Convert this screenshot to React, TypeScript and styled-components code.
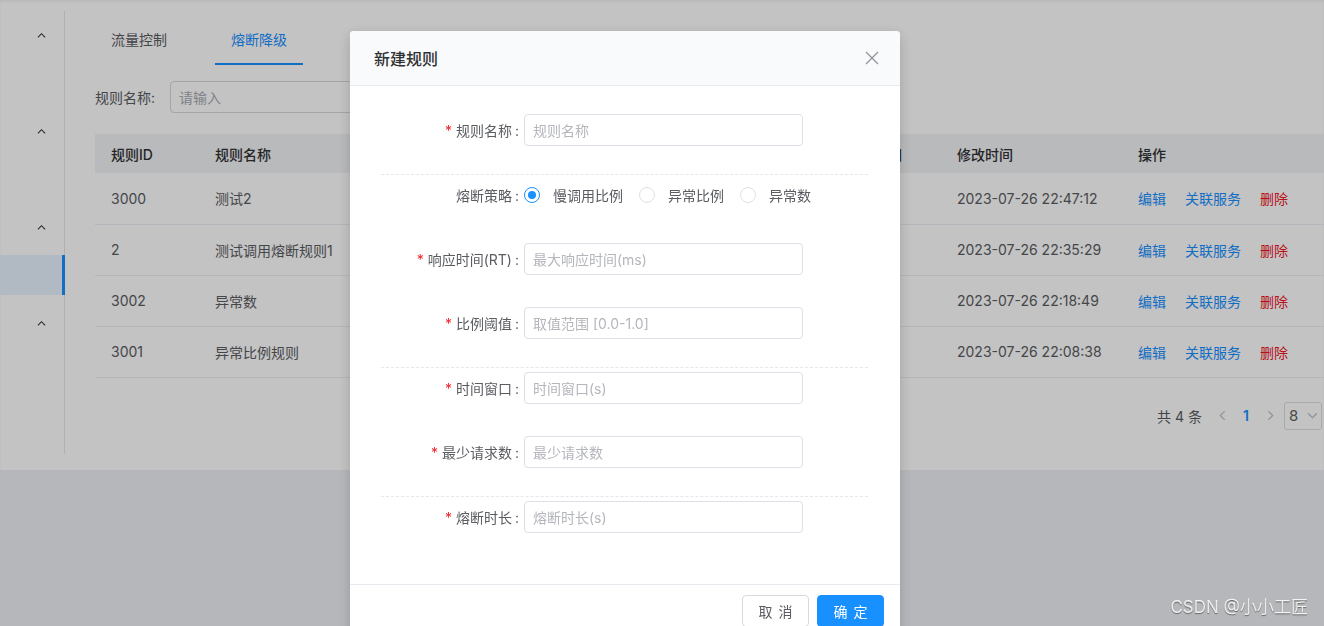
import React from 'react';
import styled, { createGlobalStyle } from 'styled-components';

const GlobalStyle = createGlobalStyle`
  html, body {
    margin: 0;
    padding: 0;
    background: #eef0f4;
    font-family: Inter, "Liberation Sans", "Noto Sans CJK SC", sans-serif;
    font-size: 14px;
    color: #606266;
    overflow: hidden;
  }
  * { box-sizing: border-box; }
`;

const rows = [
  { id: '3000', name: '测试2', time: '2023-07-26 22:47:12' },
  { id: '2', name: '测试调用熔断规则1', time: '2023-07-26 22:35:29' },
  { id: '3002', name: '异常数', time: '2023-07-26 22:18:49' },
  { id: '3001', name: '异常比例规则', time: '2023-07-26 22:08:38' },
];

const Chevron = ({ dir = 'up', size = 9, color = '#333' }: { dir?: 'up' | 'down' | 'left' | 'right'; size?: number; color?: string }) => {
  const pts = {
    up: '1,7 5,3 9,7',
    down: '1,3 5,7 9,3',
    left: '7,1 3,5 7,9',
    right: '3,1 7,5 3,9',
  }[dir];
  return (
    <svg width={size} height={size} viewBox='0 0 10 10'>
      <polyline points={pts} fill='none' stroke={color} strokeWidth='1.2' />
    </svg>
  );
};

const App: React.FC = () => {
  return (
    <>
      <GlobalStyle />
      <Panel>
        <Sidebar>
          <SideGroup>
            <GroupHead><Chevron /></GroupHead>
            <SideItem />
          </SideGroup>
          <SideGroup>
            <GroupHead><Chevron /></GroupHead>
            <SideItem />
          </SideGroup>
          <SideGroup>
            <GroupHead><Chevron /></GroupHead>
            <SideItem $active />
          </SideGroup>
          <SideGroup>
            <GroupHead><Chevron /></GroupHead>
          </SideGroup>
        </Sidebar>

        <Main>
          <Tabs>
            <Tab>流量控制</Tab>
            <Tab $active>熔断降级</Tab>
          </Tabs>

          <SearchRow>
            <SearchLabel>规则名称:</SearchLabel>
            <SearchInput placeholder='请输入' />
          </SearchRow>

          <Table>
            <colgroup>
              <col style={{ width: 104 }} />
              <col style={{ width: 260 }} />
              <col style={{ width: 371 }} />
              <col style={{ width: 111 }} />
              <col style={{ width: 181 }} />
              <col />
            </colgroup>
            <thead>
              <tr>
                <Th>规则ID</Th>
                <Th>规则名称</Th>
                <Th>熔断策略</Th>
                <Th>创建时间</Th>
                <Th>修改时间</Th>
                <Th>操作</Th>
              </tr>
            </thead>
            <tbody>
              {rows.map((r) => (
                <tr key={r.id}>
                  <Td>{r.id}</Td>
                  <Td>{r.name}</Td>
                  <Td />
                  <Td />
                  <Td>{r.time}</Td>
                  <Td>
                    <Actions>
                      <Link>编辑</Link>
                      <Link>关联服务</Link>
                      <Link $danger>删除</Link>
                    </Actions>
                  </Td>
                </tr>
              ))}
            </tbody>
          </Table>

          <Pagination>
            <Total>共 4 条</Total>
            <PageArrow><Chevron dir='left' size={11} color='#c0c4cc' /></PageArrow>
            <PageNum>1</PageNum>
            <PageArrow><Chevron dir='right' size={11} color='#c0c4cc' /></PageArrow>
            <SizeSelect>
              <span>8</span>
              <Chevron dir='down' size={11} color='#c0c4cc' />
            </SizeSelect>
          </Pagination>
        </Main>
      </Panel>

      <Mask />

      <Modal>
        <ModalHeader>
          <ModalTitle>新建规则</ModalTitle>
          <CloseBtn>
            <svg width='14' height='14' viewBox='0 0 14 14'>
              <path d='M1 1L13 13M13 1L1 13' stroke='#909399' strokeWidth='1.3' />
            </svg>
          </CloseBtn>
        </ModalHeader>

        <ModalBody>
          <Section $top={28}>
            <FormRow>
              <Label><Star>*</Star>规则名称<Colon>:</Colon></Label>
              <Input placeholder='规则名称' />
            </FormRow>
          </Section>
          <Divider />
          <Section>
            <FormRow>
              <Label>熔断策略<Colon>:</Colon></Label>
              <RadioGroup>
                <RadioItem>
                  <RadioDot $checked />
                  慢调用比例
                </RadioItem>
                <RadioItem>
                  <RadioDot />
                  异常比例
                </RadioItem>
                <RadioItem>
                  <RadioDot />
                  异常数
                </RadioItem>
              </RadioGroup>
            </FormRow>
            <FormRow>
              <Label><Star>*</Star>响应时间(RT)<Colon>:</Colon></Label>
              <Input placeholder='最大响应时间(ms)' />
            </FormRow>
            <FormRow>
              <Label><Star>*</Star>比例阈值<Colon>:</Colon></Label>
              <Input placeholder='取值范围 [0.0-1.0]' />
            </FormRow>
          </Section>
          <Divider />
          <Section>
            <FormRow>
              <Label><Star>*</Star>时间窗口<Colon>:</Colon></Label>
              <Input placeholder='时间窗口(s)' />
            </FormRow>
            <FormRow>
              <Label><Star>*</Star>最少请求数<Colon>:</Colon></Label>
              <Input placeholder='最少请求数' />
            </FormRow>
          </Section>
          <Divider />
          <Section $bottom={51}>
            <FormRow>
              <Label><Star>*</Star>熔断时长<Colon>:</Colon></Label>
              <Input placeholder='熔断时长(s)' />
            </FormRow>
          </Section>
        </ModalBody>

        <ModalFooter>
          <Button>取 消</Button>
          <Button $primary>确 定</Button>
        </ModalFooter>
      </Modal>

      <Watermark>CSDN @小小工匠</Watermark>
    </>
  );
};

export default App;

const Panel = styled.div`
  display: flex;
  background: #fff;
  box-shadow: inset 0 2px 2px rgba(0, 0, 0, 0.05);
`;

const Sidebar = styled.div`
  width: 65px;
  flex-shrink: 0;
  margin: 11px 0 16px;
  border-right: 1px solid #e6e6e6;
`;

const SideGroup = styled.div`
  display: flex;
  flex-direction: column;
`;

const GroupHead = styled.div`
  height: 48px;
  display: flex;
  align-items: center;
  justify-content: flex-end;
  padding-right: 18px;
`;

const SideItem = styled.div<{ $active?: boolean }>`
  height: 40px;
  margin: 4px -1px 4px 0;
  background: ${(p) => (p.$active ? '#e8f3ff' : 'transparent')};
  border-right: 3px solid ${(p) => (p.$active ? '#1890ff' : 'transparent')};
`;

const Main = styled.div`
  flex: 1;
  min-width: 0;
  padding: 17px 0 40px 30px;
`;

const Tabs = styled.div`
  display: flex;
  gap: 32px;
`;

const Tab = styled.div<{ $active?: boolean }>`
  padding: 12px 16px;
  line-height: 22px;
  font-size: 14px;
  color: ${(p) => (p.$active ? '#1890ff' : '#595b60')};
  border-bottom: 2px solid ${(p) => (p.$active ? '#1890ff' : 'transparent')};
`;

const SearchRow = styled.div`
  display: flex;
  align-items: center;
  margin-top: 16px;
`;

const SearchLabel = styled.span`
  width: 75px;
  color: #595b60;
`;

const SearchInput = styled.input`
  width: 240px;
  height: 32px;
  border: 1px solid #d9d9d9;
  border-radius: 4px;
  padding: 0 8px;
  font: inherit;
  color: #606266;
  outline: none;
  &::placeholder {
    color: #a8abb2;
  }
`;

const Table = styled.table`
  width: 100%;
  margin-top: 21px;
  border-collapse: collapse;
  table-layout: fixed;
`;

const Th = styled.th`
  height: 39px;
  padding: 0 16px;
  text-align: left;
  font-weight: 500;
  color: #303133;
  background: #f2f3f5;
  white-space: nowrap;
`;

const Td = styled.td`
  height: 51px;
  padding: 0 16px;
  color: #5a5c61;
  border-bottom: 1px solid #ebeef5;
  white-space: nowrap;
`;

const Actions = styled.div`
  display: flex;
  gap: 19px;
`;

const Link = styled.span<{ $danger?: boolean }>`
  color: ${(p) => (p.$danger ? '#f0141e' : '#1890ff')};
  cursor: pointer;
`;

const Pagination = styled.div`
  display: flex;
  align-items: center;
  justify-content: flex-end;
  margin: 24px 2px 0 0;
  height: 28px;
`;

const Total = styled.span`
  color: #595b60;
  margin-right: 8px;
`;

const PageArrow = styled.span`
  width: 24px;
  display: flex;
  align-items: center;
  justify-content: center;
`;

const PageNum = styled.span`
  width: 24px;
  text-align: center;
  color: #1890ff;
  font-weight: 600;
`;

const SizeSelect = styled.div`
  width: 38px;
  height: 28px;
  margin-left: 2px;
  border: 1px solid #dcdfe6;
  border-radius: 3px;
  display: flex;
  align-items: center;
  justify-content: space-between;
  padding: 0 3px 0 4px;
  color: #606266;
  font-size: 15px;
`;

const Mask = styled.div`
  position: fixed;
  inset: 0;
  background: rgba(0, 0, 0, 0.235);
`;

const Modal = styled.div`
  position: fixed;
  top: 31px;
  left: 350px;
  width: 550px;
  background: #fff;
  border-radius: 4px;
  box-shadow: 0 4px 14px rgba(0, 0, 0, 0.18);
`;

const ModalHeader = styled.div`
  height: 55px;
  display: flex;
  align-items: center;
  justify-content: space-between;
  padding: 0 21px 0 24px;
  background: #f9fafc;
  border-bottom: 1px solid #e8eaef;
  border-radius: 4px 4px 0 0;
`;

const ModalTitle = styled.div`
  font-size: 16px;
  font-weight: 500;
  color: #303133;
`;

const CloseBtn = styled.span`
  display: flex;
  cursor: pointer;
`;

const ModalBody = styled.div`
  padding: 0 32px 0 31px;
`;

const Section = styled.div<{ $top?: number; $bottom?: number }>`
  display: flex;
  flex-direction: column;
  gap: 32px;
  padding-top: ${(p) => p.$top ?? 4}px;
  padding-bottom: ${(p) => p.$bottom ?? 28}px;
`;

const Divider = styled.div`
  border-top: 1px dashed #e4e7ed;
`;

const FormRow = styled.div`
  display: flex;
  align-items: center;
  height: 32px;
`;

const Label = styled.label`
  width: 143px;
  flex-shrink: 0;
  padding-right: 5px;
  text-align: right;
  color: #5a5c61;
`;

const Star = styled.span`
  color: #f5222d;
  margin-right: 4px;
`;

const Colon = styled.span`
  margin-left: 3px;
`;

const Input = styled.input`
  width: 279px;
  height: 32px;
  border: 1px solid #dcdfe6;
  border-radius: 4px;
  padding: 0 8px;
  font: inherit;
  color: #606266;
  outline: none;
  &::placeholder {
    color: #b4b6bc;
  }
`;

const RadioGroup = styled.div`
  display: flex;
  align-items: center;
  gap: 16px;
`;

const RadioItem = styled.label`
  display: flex;
  align-items: center;
  color: #5a5c61;
`;

const RadioDot = styled.span<{ $checked?: boolean }>`
  width: 16px;
  height: 16px;
  border-radius: 50%;
  margin-right: 13px;
  border: 1px solid ${(p) => (p.$checked ? '#1890ff' : '#dcdfe6')};
  display: flex;
  align-items: center;
  justify-content: center;
  &::after {
    content: '';
    width: 8px;
    height: 8px;
    border-radius: 50%;
    background: ${(p) => (p.$checked ? '#1890ff' : 'transparent')};
  }
`;

const ModalFooter = styled.div`
  display: flex;
  justify-content: flex-end;
  gap: 8px;
  padding: 10px 16px 12px;
  border-top: 1px solid #e8eaef;
`;

const Button = styled.button<{ $primary?: boolean }>`
  width: 67px;
  height: 32px;
  padding: 0;
  border-radius: 4px;
  font: inherit;
  font-size: 14px;
  border: 1px solid ${(p) => (p.$primary ? '#1890ff' : '#d9d9d9')};
  background: ${(p) => (p.$primary ? '#1890ff' : '#fff')};
  color: ${(p) => (p.$primary ? '#fff' : '#595b60')};
  word-spacing: 2px;
  cursor: pointer;
`;

const Watermark = styled.div`
  position: fixed;
  right: 16px;
  bottom: 8px;
  font-size: 17px;
  color: rgba(255, 255, 255, 0.85);
  text-shadow: 0 1px 1px rgba(0, 0, 0, 0.45);
`;
